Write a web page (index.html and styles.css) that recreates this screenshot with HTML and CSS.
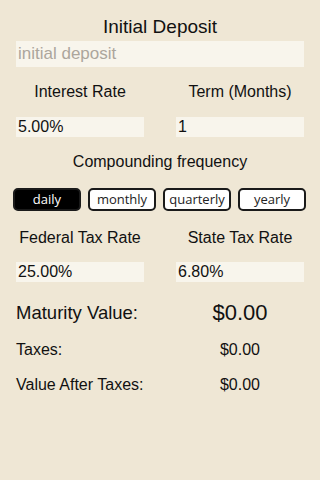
FILE: index.html
```html
<!DOCTYPE html>
<html>
<head>
<meta charset="utf-8">
<link rel="stylesheet" href="styles.css">
</head>
<body>
<div class="screen">
  <div class="title">Initial Deposit</div>
  <div class="field wide placeholder">initial deposit</div>

  <div class="pair labels first-labels">
    <div class="label">Interest Rate</div>
    <div class="label">Term (Months)</div>
  </div>
  <div class="pair">
    <div class="field">5.00%</div>
    <div class="field">1</div>
  </div>

  <div class="section">Compounding frequency</div>
  <div class="segments">
    <div class="seg active">daily</div>
    <div class="seg">monthly</div>
    <div class="seg">quarterly</div>
    <div class="seg">yearly</div>
  </div>

  <div class="pair labels tax-labels">
    <div class="label">Federal Tax Rate</div>
    <div class="label">State Tax Rate</div>
  </div>
  <div class="pair">
    <div class="field">25.00%</div>
    <div class="field">6.80%</div>
  </div>

  <div class="result big">
    <div class="rlabel">Maturity Value:</div>
    <div class="rvalue">$0.00</div>
  </div>
  <div class="result small taxes">
    <div class="rlabel">Taxes:</div>
    <div class="rvalue">$0.00</div>
  </div>
  <div class="result small after">
    <div class="rlabel">Value After Taxes:</div>
    <div class="rvalue">$0.00</div>
  </div>
</div>
</body>
</html>
```

FILE: styles.css
```css
html, body {
  margin: 0;
  padding: 0;
  background: #efe7d5;
}
.screen {
  width: 320px;
  height: 480px;
  box-sizing: border-box;
  padding: 15px 16px 0 16px;
  font-family: "Liberation Sans", Arial, sans-serif;
  color: #111;
  display: flex;
  flex-direction: column;
}
.title {
  font-size: 19px;
  line-height: 24px;
  height: 24px;
  text-align: center;
}
.field {
  background: #f8f5ec;
  height: 20px;
  line-height: 20px;
  font-size: 16px;
  padding-left: 2px;
  color: #111;
  box-sizing: border-box;
}
.field.wide {
  margin-top: 2px;
  height: 26px;
  line-height: 26px;
  font-size: 17px;
}
.placeholder {
  color: #aca69c;
}
.pair {
  display: grid;
  grid-template-columns: 128px 128px;
  column-gap: 32px;
}
.labels {
  height: 20px;
  line-height: 20px;
}
.first-labels {
  margin-top: 15px;
  margin-bottom: 15px;
}
.label {
  font-size: 16px;
  text-align: center;
}
.section {
  margin-top: 15px;
  height: 20px;
  line-height: 20px;
  font-size: 16px;
  text-align: center;
}
.segments {
  margin: 16px -3px 0 -3px;
  display: flex;
  gap: 7px;
  height: 23px;
}
.seg {
  width: 68px;
  height: 23px;
  box-sizing: border-box;
  border: 2px solid #1a1a1a;
  border-radius: 5px;
  background: #fff;
  font-family: "Open Sans", "Liberation Sans", sans-serif;
  font-size: 13px;
  line-height: 19px;
  text-align: center;
  color: #222;
}
.seg.active {
  background: #000;
  color: #fff;
}
.tax-labels {
  margin-top: 17px;
  margin-bottom: 14px;
}
.result {
  display: grid;
  grid-template-columns: 128px 128px;
  column-gap: 32px;
  align-items: center;
}
.result .rvalue {
  text-align: center;
}
.result.big {
  margin-top: 18px;
  height: 24px;
}
.result.big .rlabel {
  font-size: 18.5px;
}
.result.big .rvalue {
  font-size: 22px;
}
.result.small {
  height: 20px;
  font-size: 16px;
}
.result.taxes {
  margin-top: 16px;
}
.result.after {
  margin-top: 15px;
}
```
